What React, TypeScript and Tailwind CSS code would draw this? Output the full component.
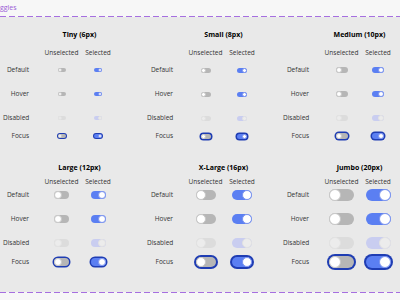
import React from "react";

type Size = { name: string; w: number; h: number; ring: string };
type State = "default" | "hover" | "disabled" | "focus";

const font = { fontFamily: '"Open Sans", "Liberation Sans", sans-serif' };

function Toggle({ size, on, state }: { size: Size; on: boolean; state: State }) {
  const track =
    state === "disabled"
      ? on
        ? "bg-[#c9cdf0]"
        : "bg-[#dcdcdc]"
      : on
        ? "bg-[#5b7ff2]"
        : "bg-[#b6b6b6]";
  const knob =
    state === "disabled"
      ? "bg-[#ececec] border-[#e2e2e2]"
      : on
        ? "bg-white border-[#7d95ee]"
        : "bg-white border-[#c8c8c8]";
  const k = size.h;
  return (
    <div
      className={`flex items-center rounded-full ${track} ${on ? "justify-end" : "justify-start"} ${
        state === "focus" ? size.ring : ""
      }`}
      style={{ width: size.w, height: size.h }}
    >
      <div className={`rounded-full border-[0.5px] ${knob}`} style={{ width: k, height: k }} />
    </div>
  );
}

type Spacing = { pt: string; head: string; def: string; hov: string; dis: string; foc: string };

function Panel({ size, sp }: { size: Size; sp: Spacing }) {
  const rows: [State, string, string][] = [
    ["default", "Default", sp.def],
    ["hover", "Hover", sp.hov],
    ["disabled", "Disabled", sp.dis],
    ["focus", "Focus", sp.foc],
  ];
  return (
    <div className={`flex flex-col ${sp.pt}`}>
      <div className="grid grid-cols-[40px_73px] h-[12px] items-center">
        <div />
        <div className="text-center text-[7px] font-bold text-black">{size.name}</div>
      </div>
      <div className={`grid grid-cols-[40px_37px_36px] h-[12px] items-center text-[6.5px] text-[#333] ${sp.head}`}>
        <div />
        <div className="text-center">Unselected</div>
        <div className="text-center">Selected</div>
      </div>
      {rows.map(([state, label, mt]) => (
        <div key={state} className={`grid grid-cols-[40px_37px_36px] h-[12px] items-center ${mt}`}>
          <div className="pr-[14px] text-right text-[6.5px] text-[#333] whitespace-nowrap">{label}</div>
          <div className="flex justify-center">
            <Toggle size={size} on={false} state={state} />
          </div>
          <div className="flex justify-center">
            <Toggle size={size} on={true} state={state} />
          </div>
        </div>
      ))}
    </div>
  );
}

const top: Size[] = [
  { name: "Tiny (6px)", w: 8, h: 4, ring: "ring-1 ring-[#1f3db3]" },
  { name: "Small (8px)", w: 10, h: 5, ring: "ring-[1.5px] ring-[#1f3db3]" },
  { name: "Medium (10px)", w: 12, h: 6, ring: "ring-[1.5px] ring-[#1f3db3]" },
];
const bottom: Size[] = [
  { name: "Large (12px)", w: 15, h: 8, ring: "ring-[1.5px] ring-[#1f3db3]" },
  { name: "X-Large (16px)", w: 20, h: 10, ring: "ring-2 ring-[#1f3db3]" },
  { name: "Jumbo (20px)", w: 25, h: 12, ring: "ring-2 ring-[#1f3db3]" },
];

const topSp: Spacing = { pt: "pt-[12px]", head: "mt-[6px]", def: "mt-[5px]", hov: "mt-[12px]", dis: "mt-[12px]", foc: "mt-[6px]" };
const botSp: Spacing = { pt: "pt-[20px]", head: "mt-[2px]", def: "mt-[1px]", hov: "mt-[12px]", dis: "mt-[12px]", foc: "mt-[7px]" };

const dash = "h-px w-full bg-[repeating-linear-gradient(90deg,#a66fe0_0_6px,transparent_6px_9px)]";

export default function App() {
  return (
    <div className="w-[400px] h-[300px] overflow-hidden bg-[#f7f7f7] flex flex-col" style={font}>
      <div className="h-[16px] flex items-center">
        <span className="text-[7px] text-[#9a5bd6]">ggles</span>
      </div>
      <div className={dash} />
      <div className="bg-[#e9e9e9] h-[275px] flex flex-col">
        <div className="grid grid-cols-[144px_136px_120px] pl-[3px]">
          {top.map((s) => (
            <Panel key={s.name} size={s} sp={topSp} />
          ))}
        </div>
        <div className="grid grid-cols-[144px_136px_120px] pl-[3px]">
          {bottom.map((s) => (
            <Panel key={s.name} size={s} sp={botSp} />
          ))}
        </div>
      </div>
      <div className={dash} />
    </div>
  );
}
